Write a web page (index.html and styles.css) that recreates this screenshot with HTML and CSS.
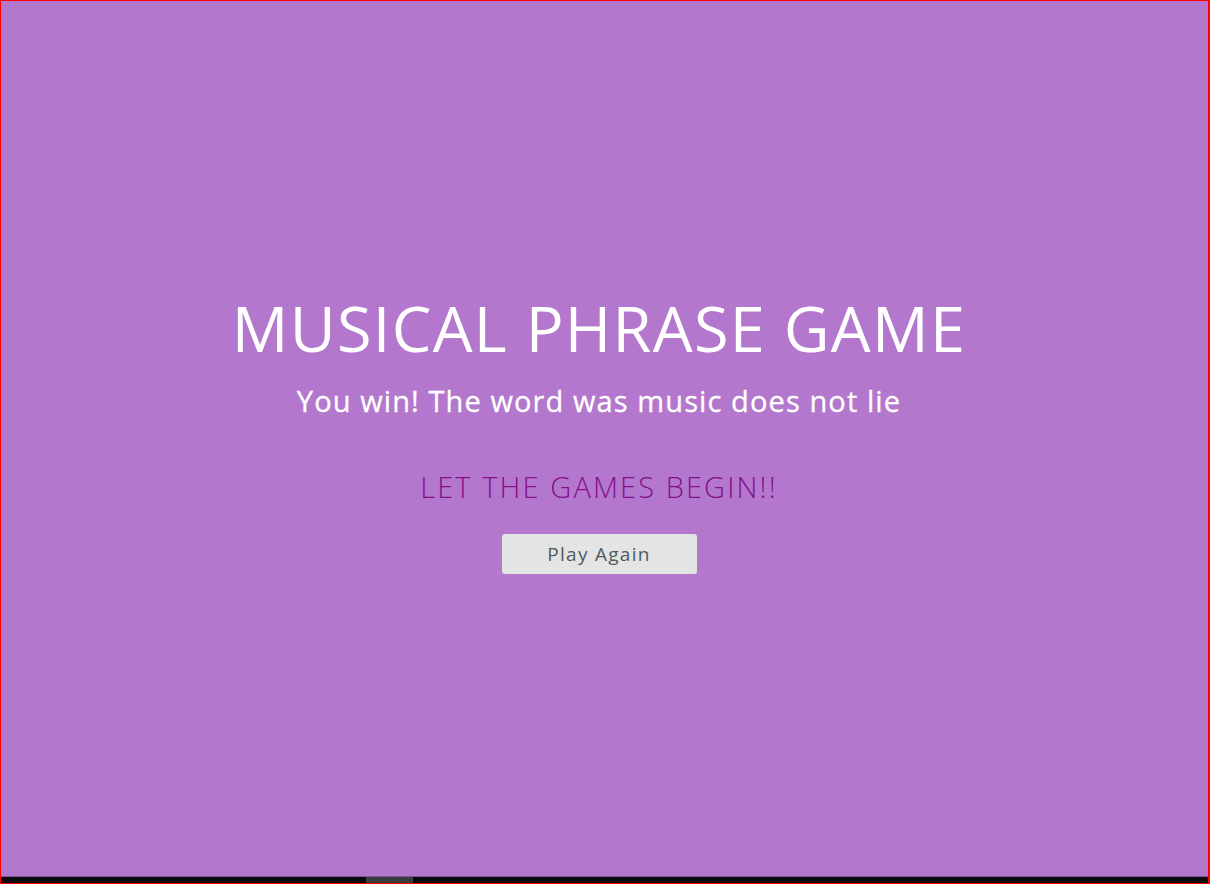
FILE: index.html
```html
<!DOCTYPE html>
<html lang="en">
<head>
<meta charset="utf-8">
<title>Musical Phrase Game</title>
<link rel="stylesheet" href="styles.css">
</head>
<body>
<div class="frame">
  <main class="overlay">
    <h1 class="title">MUSICAL PHRASE GAME</h1>
    <h2 class="message">You win! The word was music does not lie</h2>
    <p class="begin">LET THE GAMES BEGIN!!</p>
    <button class="btn-reset">Play Again</button>
  </main>
  <div class="hscroll"><div class="thumb"></div></div>
</div>
</body>
</html>
```
FILE: styles.css
```css
html, body {
  margin: 0;
  padding: 0;
  height: 100%;
}
body {
  font-family: "Open Sans", "Liberation Sans", sans-serif;
}
.frame {
  box-sizing: border-box;
  height: 884px;
  width: 1210px;
  border: 1px solid #ff0000;
  border-right-width: 2px;
  display: flex;
  flex-direction: column;
  background: #b378cd;
}
.overlay {
  flex: 1;
  display: flex;
  flex-direction: column;
  align-items: center;
  justify-content: center;
  padding: 0 11px 15px 0;
  border-bottom: 1px solid #7d5590;
}
.title {
  margin: 0;
  color: #ffffff;
  font-weight: 400;
  font-size: 63px;
  line-height: 80px;
  letter-spacing: 1.3px;
}
.message {
  margin: 13px 0 0;
  color: #ffffff;
  font-weight: 500;
  font-size: 29px;
  line-height: 40px;
  letter-spacing: 1.1px;
  -webkit-text-stroke: 0.3px #ffffff;
}
.begin {
  margin: 46px 0 0;
  color: #86108a;
  font-weight: 300;
  font-size: 29px;
  line-height: 40px;
  letter-spacing: 2.1px;
}
.btn-reset {
  margin-top: 27px;
  width: 195px;
  height: 40px;
  border: none;
  border-radius: 3px;
  background: #e4e4e4;
  color: #4f5a5e;
  font-family: "Open Sans", "Liberation Sans", sans-serif;
  font-size: 19px;
  font-weight: 400;
  letter-spacing: 1.3px;
  padding: 0;
}
.hscroll {
  height: 6px;
  background: #0b0b0b;
  position: relative;
}
.thumb {
  position: absolute;
  left: 365px;
  top: 0;
  width: 47px;
  height: 6px;
  background: #3c3c3c;
}
```
